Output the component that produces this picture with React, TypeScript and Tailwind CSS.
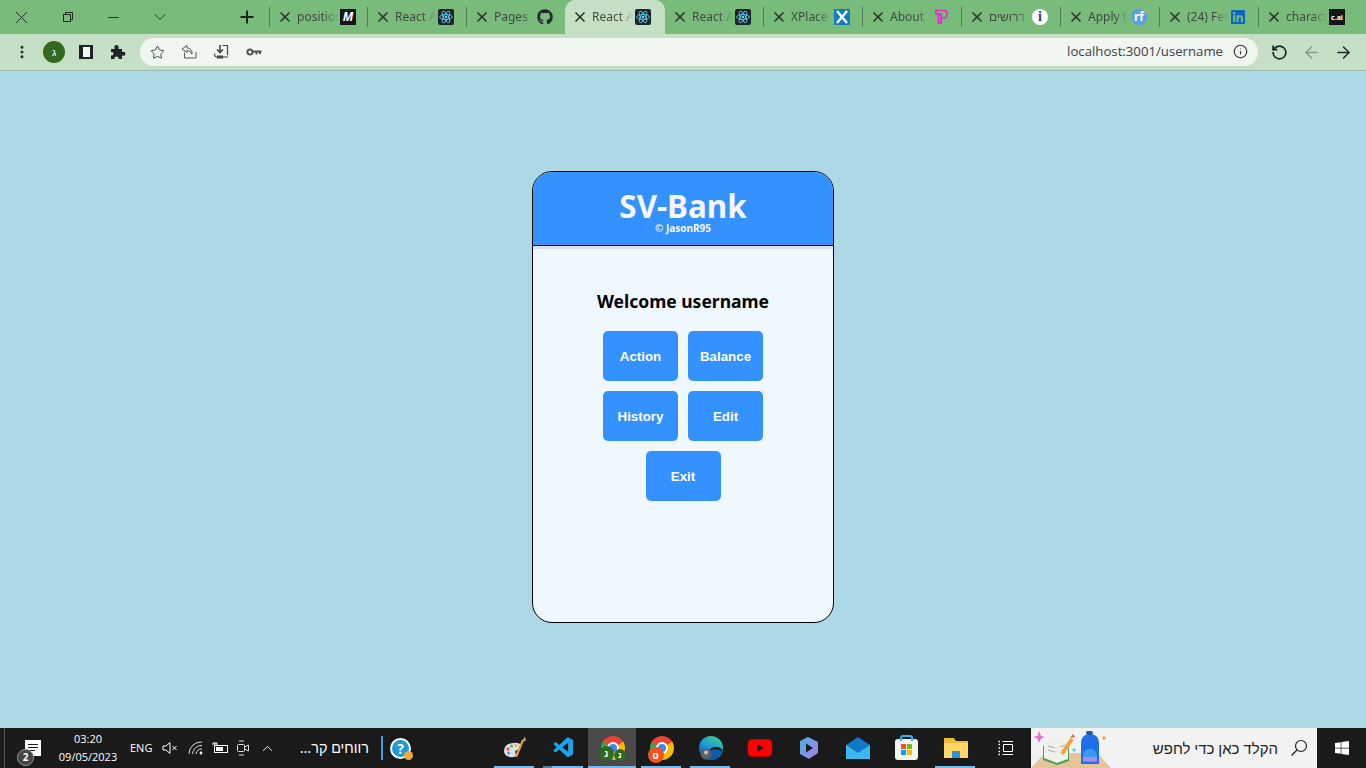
import React from 'react';
import { X, Minus, ChevronDown, Plus, EllipsisVertical, Star, ArrowLeft, ArrowRight, RotateCcw, Info, ChevronUp } from 'lucide-react';
import { FaGithub, FaLinkedin, FaWindows, FaYoutube } from 'react-icons/fa';
import { VscVscode } from 'react-icons/vsc';

const ReactIcon = () => (
  <svg width="16" height="16" viewBox="0 0 16 16">
    <rect width="16" height="16" rx="2" fill="#20232a" />
    <g fill="none" stroke="#61dafb" strokeWidth="0.8">
      <ellipse cx="8" cy="8" rx="6.4" ry="2.5" />
      <ellipse cx="8" cy="8" rx="6.4" ry="2.5" transform="rotate(60 8 8)" />
      <ellipse cx="8" cy="8" rx="6.4" ry="2.5" transform="rotate(120 8 8)" />
    </g>
    <circle cx="8" cy="8" r="1.3" fill="#61dafb" />
  </svg>
);

const MediumIcon = () => (
  <div className="w-4 h-4 bg-[#16141a] text-white flex items-center justify-center text-[12px] font-bold italic leading-none">M</div>
);

const XPlaceIcon = () => (
  <svg width="16" height="16" viewBox="0 0 16 16">
    <rect width="16" height="16" fill="#0f7dc2" />
    <path d="M3 2 L13 14 M13 2 L3 14" stroke="#fff" strokeWidth="2.4" />
  </svg>
);

const PIcon = () => (
  <svg width="16" height="16" viewBox="0 0 16 16" fill="none" stroke="#e81ed0" strokeWidth="1.5">
    <path d="M3 1.5 H11 Q14 1.5 14 5 Q14 9 11 9 H8 V5 H3 Z" />
    <path d="M5.5 5 V14 H8 V9" />
  </svg>
);

const InfoCircle = () => (
  <div className="w-4 h-4 rounded-full bg-white text-[#1d3f8f] flex items-center justify-center text-[14px] font-bold leading-none font-['Liberation_Serif',serif]">i</div>
);

const RfIcon = () => (
  <div className="w-4 h-4 rounded-full bg-[#5b9de8] text-white flex items-center justify-center text-[12px] font-bold leading-none">rf</div>
);

const CaiIcon = () => (
  <div className="w-4 h-4 bg-[#16161a] text-white flex items-center justify-center text-[7px] font-bold leading-none">c.ai</div>
);

const tabs = [
  { title: 'position', icon: <MediumIcon />, width: 'w-[98px]', sep: true },
  { title: 'React App', icon: <ReactIcon />, width: 'w-[99px]', sep: true },
  { title: 'Pages', icon: <FaGithub size={16} className="text-[#24292f]" />, width: 'w-[98px]' },
  { title: 'React App', icon: <ReactIcon />, width: 'w-[100px]', active: true },
  { title: 'React App', icon: <ReactIcon />, width: 'w-[99px]', sep: true },
  { title: 'XPlace', icon: <XPlaceIcon />, width: 'w-[99px]', sep: true },
  { title: 'About', icon: <PIcon />, width: 'w-[99px]', sep: true },
  { title: 'דרושים', icon: <InfoCircle />, width: 'w-[99px]', sep: true },
  { title: 'Apply to', icon: <RfIcon />, width: 'w-[99px]', sep: true },
  { title: '(24) Feed', icon: <FaLinkedin size={16} className="text-[#0a66c2]" />, width: 'w-[99px]', sep: true },
  { title: 'character', icon: <CaiIcon />, width: 'w-[99px]' },
];

const Tab = ({ title, icon, active, sep, width }: { title: string; icon: React.ReactNode; active?: boolean; sep?: boolean; width: string }) => (
  <div className={`${width} h-[34px] shrink-0 flex items-center pl-[7px] relative ${active ? 'rounded-t-[10px] bg-[#c5e0c5]' : ''}`}>
    <X size={16} strokeWidth={2.6} className="text-[#2c3a2e] shrink-0" />
    <div className="w-[41px] ml-[4px] overflow-hidden whitespace-nowrap text-[12px] text-[#3d4a3f] [mask-image:linear-gradient(to_right,black_65%,transparent)]">
      {title}
    </div>
    <div className="ml-[2px] shrink-0">{icon}</div>
    {sep && <div className="absolute right-0 top-[7px] h-[20px] w-px bg-[#4f7a54]" />}
  </div>
);

const PuzzleIcon = () => (
  <svg width="16" height="16" viewBox="0 0 16 16" fill="#1f2328">
    <path d="M1 5 H4.5 Q3.8 1 6.5 1 Q9.2 1 8.5 5 H12 V8 Q15.5 7.2 15.5 9.8 Q15.5 12.4 12 11.6 V15 H8.5 Q9 12.5 6.5 12.5 Q4 12.5 4.5 15 H1 V11.5 Q3.5 12 3.5 9.8 Q3.5 7.6 1 8.2 Z" />
  </svg>
);

const ShareIcon = () => (
  <svg width="16" height="16" viewBox="0 0 16 16" fill="none" stroke="#555" strokeWidth="1">
    <path d="M6 1.5 L1 5 L6 8.5 V6.5 Q9.5 6.5 11 10 Q11.5 4.5 6 3.8 Z" />
    <path d="M3.5 8.5 V14 H15 V8" />
  </svg>
);

const InstallIcon = () => (
  <svg width="16" height="16" viewBox="0 0 16 16" fill="none" stroke="#444" strokeWidth="1.2">
    <path d="M7 1 V8 M4 5.5 L7 8.5 L10 5.5" strokeWidth="1.6" />
    <path d="M9.5 1.5 H14.5 V11 M1.5 9.5 Q1.5 13 4 13 H15" />
    <path d="M4 11.5 H10 V14.5 H4 Z" fill="#444" stroke="none" />
  </svg>
);

const KeyIcon = () => (
  <svg width="16" height="12" viewBox="0 0 16 12" fill="none" stroke="#555">
    <circle cx="4" cy="6" r="2.6" strokeWidth="2" />
    <path d="M6.5 5.5 H15.5 M10.5 5.5 V8.5 M14 5.5 V8" strokeWidth="2" />
  </svg>
);

const TabStrip = () => (
  <div className="h-[34px] bg-[#78bb7b] flex items-center">
    <div className="w-[230px] shrink-0 flex items-center text-[#1f2a20]">
      <X size={21} strokeWidth={1.1} className="ml-[11px]" />
      <svg width="12" height="12" viewBox="0 0 12 12" fill="none" stroke="#1f2a20" className="ml-[30px]">
        <rect x="1.5" y="3.5" width="7" height="7" />
        <path d="M3.5 3.5 V1.5 H10.5 V8.5 H8.5" />
      </svg>
      <Minus size={17} strokeWidth={1.3} className="ml-[31px]" />
      <ChevronDown size={20} strokeWidth={1} className="ml-[28px]" />
    </div>
    <Plus size={20} strokeWidth={2.4} className="text-[#1c261d] ml-[7px] shrink-0" />
    <div className="ml-[12px] w-px h-[20px] bg-[#4f7a54] shrink-0" />
    <div className="flex">
      {tabs.map((t, i) => (
        <Tab key={i} {...t} />
      ))}
    </div>
  </div>
);

const Toolbar = () => (
  <div className="h-[37px] bg-[#c5e0c5] border-b border-[#9cb8b2] flex items-center">
    <EllipsisVertical size={16} strokeWidth={2.6} className="ml-[14px] text-[#2b2f2c] shrink-0" />
    <div className="ml-[13px] w-[22px] h-[22px] rounded-full bg-[#33691e] text-white flex items-center justify-center text-[10px] shrink-0">ג</div>
    <div className="ml-[14px] w-[14px] h-[14px] border-y-[2px] border-l-[4px] border-r-[3px] border-[#1f2328] bg-[#f3f7f3] shrink-0" />
    <div className="ml-[17px] shrink-0"><PuzzleIcon /></div>
    <div className="ml-[14px] w-[1118px] h-[28px] rounded-full bg-[#f0f6f0] flex items-center shrink-0">
      <Star size={15} strokeWidth={1.6} className="ml-[10px] text-[#444]" />
      <div className="ml-[16px]"><ShareIcon /></div>
      <div className="ml-[16px]"><InstallIcon /></div>
      <div className="ml-[17px]"><KeyIcon /></div>
      <div className="ml-auto flex items-center">
        <span className="text-[13.2px] text-[#3c4043] font-['Open_Sans',sans-serif]">localhost:3001/username</span>
        <Info size={15} strokeWidth={1.8} className="ml-[10px] mr-[10px] text-[#333]" />
      </div>
    </div>
    <RotateCcw size={17} strokeWidth={2.4} className="ml-[13px] text-[#1f2328] shrink-0" />
    <ArrowLeft size={19} strokeWidth={1.8} className="ml-[14px] text-[#86998a] shrink-0" />
    <ArrowRight size={19} strokeWidth={1.8} className="ml-[13px] text-[#1f2328] shrink-0" />
  </div>
);

const MenuButton = ({ label }: { label: string }) => (
  <button className="w-[75px] h-[50px] pt-px rounded-[5px] bg-[#3392ff] text-white text-[13.33px] font-bold font-['Liberation_Sans',sans-serif]">
    {label}
  </button>
);

const Card = () => (
  <div className="w-[302px] h-[452px] mt-[100px] rounded-[20px] border border-black bg-[#f0f8ff] overflow-hidden">
    <div className="h-[74px] bg-[#3392ff] border-b border-black flex flex-col items-center text-[#f5f7fb]">
      <div className="mt-[18px] text-[31.4px] leading-[32px] font-bold font-['Noto_Sans',sans-serif]">SV-Bank</div>
      <div className="text-[10px] leading-[12px] font-bold font-['Noto_Sans',sans-serif]">© JasonR95</div>
    </div>
    <div className="h-[3px] bg-[#d9e2ec]" />
    <div className="flex flex-col items-center">
      <h2 className="mt-[38px] text-[17.5px] leading-[28px] font-bold text-black font-['Noto_Sans',sans-serif]">Welcome username</h2>
      <div className="mt-[16px] grid grid-cols-2 gap-[10px]">
        <MenuButton label="Action" />
        <MenuButton label="Balance" />
        <MenuButton label="History" />
        <MenuButton label="Edit" />
      </div>
      <div className="mt-[10px]">
        <MenuButton label="Exit" />
      </div>
    </div>
  </div>
);

const ChromeBadge = ({ children }: { children?: React.ReactNode }) => (
  <div className="relative w-6 h-6 rounded-full bg-[conic-gradient(from_300deg,#ea4335_0_33%,#fbbc05_33%_66%,#34a853_66%)]">
    <div className="absolute inset-[6px] rounded-full bg-[#4285f4] border-2 border-white" />
    {children}
  </div>
);

const Badge = ({ letter, className }: { letter: string; className: string }) => (
  <div className={`absolute rounded-full text-white flex items-center justify-center font-bold leading-none ${className}`}>{letter}</div>
);

const Paint = () => (
  <svg width="24" height="24" viewBox="0 0 24 24">
    <path d="M1 15 Q1 8 10 7 Q18 6 18 11 Q18 14 14 14 Q11 15 13 18 Q13 22 7 21 Q1 20 1 15 Z" fill="#d8e2ea" />
    <circle cx="5" cy="13" r="1.7" fill="#e05a5a" />
    <circle cx="8.5" cy="10" r="1.6" fill="#5bb85b" />
    <circle cx="13" cy="9.5" r="1.5" fill="#e6b84a" />
    <circle cx="5.5" cy="17" r="1.6" fill="#4aa0e8" />
    <path d="M20 4 L13 21" stroke="#e39a4a" strokeWidth="2.2" />
    <path d="M19 5 L22 0.5 L23 5 Z" fill="#c9a070" />
  </svg>
);

const Copilot = () => (
  <svg width="22" height="24" viewBox="0 0 22 24" fill="none">
    <defs>
      <linearGradient id="cp" x1="0" y1="0" x2="1" y2="1">
        <stop offset="0" stopColor="#3fb4e8" />
        <stop offset="1" stopColor="#b07ae6" />
      </linearGradient>
    </defs>
    <path d="M2 5 L10 1 L20 6 V17 L11 23 L2 18 Z" fill="url(#cp)" />
    <path d="M8 7.5 L15 12 L8 16.5 Z" fill="#1a1a1a" />
  </svg>
);

const Mail = () => (
  <svg width="24" height="24" viewBox="0 0 24 24">
    <path d="M0 9 L12 1 L24 9 V23 H0 Z" fill="#0f78c8" />
    <path d="M0 9 L12 17 L24 9 V23 H0 Z" fill="#3fb6f0" />
  </svg>
);

const Store = () => (
  <div className="relative w-[23px] h-[21px] mt-[3px] rounded-[3px] bg-[#f3f3f3] flex items-center justify-center">
    <div className="absolute top-[-4px] left-[5px] w-[13px] h-[6px] border-2 border-b-0 border-[#29b6f6] rounded-t-[3px]" />
    <div className="grid grid-cols-2 gap-px w-[11px] h-[11px]">
      <div className="bg-[#f25022]" />
      <div className="bg-[#7fba00]" />
      <div className="bg-[#00a4ef]" />
      <div className="bg-[#ffb900]" />
    </div>
  </div>
);

const Explorer = () => (
  <svg width="24" height="20" viewBox="0 0 24 20">
    <path d="M0 0 H10 L12 3 H24 V20 H0 Z" fill="#f0b93a" />
    <rect x="0" y="5" width="24" height="15" fill="#ffd767" />
    <rect x="8" y="13" width="8" height="7" fill="#2f8fd8" />
  </svg>
);

const Edge = () => (
  <svg width="24" height="24" viewBox="0 0 24 24">
    <defs>
      <linearGradient id="eg" x1="0.8" y1="0" x2="0.2" y2="1">
        <stop offset="0" stopColor="#3fd08a" />
        <stop offset="0.5" stopColor="#1a9ad8" />
        <stop offset="1" stopColor="#0c4f96" />
      </linearGradient>
    </defs>
    <circle cx="12" cy="12" r="12" fill="url(#eg)" />
    <path d="M11 13 Q18 8 23.5 14 Q22 19 17 21 Q11 19 11 13 Z" fill="#1a1a1a" />
    <path d="M12 14 Q18 12 23 15 Q21 22 13 24 Q9 19 12 14 Z" fill="#0c5aa8" />
    <circle cx="7" cy="18" r="5.5" fill="#59616b" />
    <circle cx="7" cy="16.5" r="2" fill="#c9c2b8" />
  </svg>
);

const TaskApp = ({ children, open, active, split }: { children: React.ReactNode; open?: boolean; active?: boolean; split?: boolean }) => (
  <div className="w-[49px] h-[40px] shrink-0 relative flex items-center justify-center">
    {active && <div className="absolute inset-y-0 left-0 right-px bg-[#4a4a4a]" />}
    <div className="relative">{children}</div>
    {open && <div className={active ? 'absolute bottom-0 left-0 right-px h-[2px] bg-[#76b9ed]' : 'absolute bottom-0 left-[4px] w-[40px] h-[2px] bg-[#76b9ed]'} />}
    {split && <div className="absolute bottom-0 left-[4px] w-[9px] h-[2px] bg-[#4f7fa5]" />}
  </div>
);

const Taskbar = () => (
  <div className="h-[40px] bg-[#1a1a1a] flex items-center text-white font-['Open_Sans',sans-serif]">
    <div className="ml-[4px] w-px h-full bg-[#555] shrink-0" />
    {/* notifications */}
    <div className="relative ml-[20px] w-[16px] h-[16px] bg-white shrink-0">
      <div className="absolute left-[3px] top-[4px] w-[10px] h-px bg-[#1a1a1a]" />
      <div className="absolute left-[3px] top-[7px] w-[10px] h-px bg-[#1a1a1a]" />
      <div className="absolute left-[3px] top-[10px] w-[7px] h-px bg-[#1a1a1a]" />
      <div className="absolute left-[-8px] top-[9px] w-[17px] h-[17px] rounded-full bg-[#444] border border-[#999] text-[10px] leading-[15px] text-center font-bold">2</div>
    </div>
    <div className="ml-[10px] w-[74px] shrink-0 text-center text-[11px] leading-[18px]">
      <div>03:20</div>
      <div>09/05/2023</div>
    </div>
    <span className="ml-[5px] w-[23px] text-[11px] shrink-0">ENG</span>
    <svg width="16" height="14" viewBox="0 0 16 14" fill="none" stroke="#fff" className="ml-[9px] shrink-0">
      <path d="M1 5 H4 L8 1.5 V12.5 L4 9 H1 Z M10.5 5 L14.5 9 M14.5 5 L10.5 9" />
    </svg>
    <svg width="16" height="14" viewBox="0 0 16 14" fill="none" stroke="#ddd" className="ml-[10px] shrink-0">
      <path d="M1 13 A12 12 0 0 1 14 1 M4.5 13 A9 9 0 0 1 14 4.5 M8 13 A6 6 0 0 1 14 8" />
      <circle cx="13" cy="12" r="1.4" fill="#fff" stroke="none" />
    </svg>
    <svg width="18" height="14" viewBox="0 0 18 14" fill="none" stroke="#fff" className="ml-[7px] shrink-0">
      <rect x="3.5" y="4.5" width="13" height="7" />
      <rect x="5" y="6" width="7" height="4" fill="#fff" stroke="none" />
      <path d="M1 3 H7 M3 1 V3 M5 1 V3" />
    </svg>
    <svg width="14" height="18" viewBox="0 0 14 18" fill="none" stroke="#ddd" className="ml-[7px] shrink-0">
      <rect x="1.5" y="5.5" width="7" height="7" rx="1" />
      <path d="M8.5 8 L12.5 6 V12 L8.5 10 M3 2 H8 M3 16 H8" />
    </svg>
    <ChevronUp size={17} strokeWidth={1.3} className="ml-[9px] shrink-0" />
    <span dir="rtl" className="ml-[23px] w-[70px] shrink-0 text-[14.4px] whitespace-nowrap font-['Noto_Sans',sans-serif]">רווחים קר...</span>
    <div className="ml-[12px] w-[2px] h-[24px] bg-[#3a9fe0] shrink-0" />
    <div className="relative ml-[7px] w-[21px] h-[21px] rounded-full bg-[#1d9bd8] border-2 border-white text-white text-[14px] leading-[17px] text-center font-bold shrink-0">
      ?
      <div className="absolute right-[-4px] bottom-[-3px] w-[9px] h-[9px] rounded-full bg-[#f2a93b]" />
    </div>
    <div className="ml-[79px] flex shrink-0">
      <TaskApp open><Paint /></TaskApp>
      <TaskApp open split><VscVscode size={24} className="text-[#22a0e8]" /></TaskApp>
      <TaskApp open active>
        <ChromeBadge>
          <Badge letter="ג" className="left-[-2px] bottom-[-1px] w-[15px] h-[15px] bg-[#2f6a1e] text-[9px]" />
          <Badge letter="ג" className="right-[-1px] bottom-[-1px] w-[12px] h-[12px] bg-[#2f6a1e] text-[8px]" />
        </ChromeBadge>
      </TaskApp>
      <TaskApp open>
        <ChromeBadge>
          <Badge letter="ט" className="left-[-2px] bottom-[-3px] w-[16px] h-[16px] bg-[#f4511e] text-[10px]" />
        </ChromeBadge>
      </TaskApp>
      <TaskApp open><Edge /></TaskApp>
      <TaskApp><FaYoutube size={26} className="text-[#f00]" /></TaskApp>
      <TaskApp><Copilot /></TaskApp>
      <TaskApp><Mail /></TaskApp>
      <TaskApp><Store /></TaskApp>
      <TaskApp open><Explorer /></TaskApp>
      <div className="w-[51px] h-[40px] flex items-center justify-center shrink-0">
        <svg width="16" height="16" viewBox="0 0 16 16" fill="none" stroke="#fff">
          <path d="M4.5 1.5 H15 M4.5 14.5 H15 M5.5 4.5 H14.5 V11.5 H5.5 Z" />
          <path d="M0.5 1.5 H2 M0.5 4.5 H2 M0.5 8 H2 M0.5 11.5 H2 M0.5 14.5 H2" strokeWidth="1.5" />
        </svg>
      </div>
    </div>
    <div className="w-[286px] h-[40px] bg-[#f2f2f2] flex items-center shrink-0 overflow-hidden">
      <svg width="84" height="40" viewBox="0 0 84 40" className="shrink-0">
        <path d="M0 40 L14 25 H66 L80 40 Z" fill="#e6c49a" />
        <path d="M12 18 L26 14 L38 19 V33 L26 37 L12 32 Z" fill="#4f9a5c" />
        <path d="M13 16 L26 12 L37 17 V31 L26 35 L13 30 Z" fill="#eef0ea" />
        <path d="M17 18 L24 20 M17 22 L24 24 M29 19 L34 17" stroke="#aaa" />
        <path d="M31 26 L41 11" stroke="#f2a13c" strokeWidth="4" />
        <path d="M39 10 L42 6 L44 9 Z" fill="#e8553e" />
        <path d="M50 16 Q50 6 59 6 Q68 6 68 16 V36 H50 Z" fill="#1e6fe8" />
        <rect x="55" y="3" width="7" height="4" rx="2" fill="#1a58c0" />
        <path d="M52 30 Q52 21 59 21 Q66 21 66 30 V34 H52 Z" fill="#3d9af0" />
        <rect x="52" y="29" width="14" height="4" fill="#a98cf0" />
        <path d="M8 3 L10 8 L14 9 L10 10.5 L8 15 L6.5 10.5 L2 9 L6.5 8 Z" fill="#e86be0" />
        <circle cx="43" cy="22" r="1.7" fill="#5ad0e8" />
        <circle cx="73" cy="10" r="1.8" fill="#f5a623" />
      </svg>
      <span dir="rtl" className="ml-auto text-[15px] text-[#222] whitespace-nowrap font-['Noto_Sans',sans-serif]">הקלד כאן כדי לחפש</span>
      <svg width="18" height="18" viewBox="0 0 18 18" fill="none" stroke="#222" strokeWidth="1.2" className="ml-[12px] mr-[9px] shrink-0">
        <circle cx="11" cy="7" r="5.5" />
        <path d="M7 11 L1.5 16.5" />
      </svg>
    </div>
    <div className="flex-1 flex items-center justify-center">
      <FaWindows size={16} />
    </div>
  </div>
);

export default function App() {
  return (
    <div className="w-[1366px] h-[768px] flex flex-col overflow-hidden bg-[#add8e6] font-['Noto_Sans',sans-serif]">
      <TabStrip />
      <Toolbar />
      <main className="flex-1 flex justify-center items-start min-h-0">
        <Card />
      </main>
      <Taskbar />
    </div>
  );
}
